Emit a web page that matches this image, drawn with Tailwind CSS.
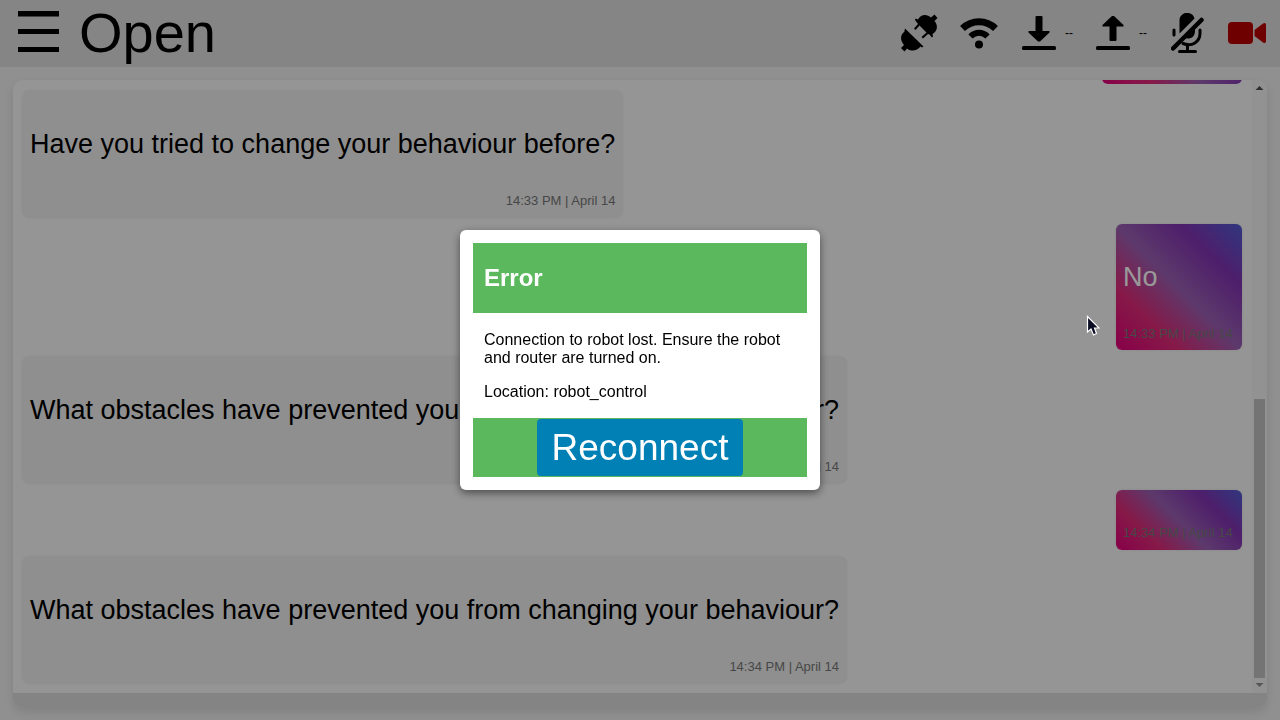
<!DOCTYPE html>
<html lang="en">
<head>
<meta charset="utf-8">
<meta name="viewport" content="width=device-width, initial-scale=1">
<title>Robot chat</title>
<script src="https://cdn.jsdelivr.net/npm/@tailwindcss/browser@4"></script>
</head>
<body class="flex h-screen flex-col overflow-hidden bg-[#f0f0f0] font-['Liberation_Sans',Arial,sans-serif] text-black">
  <header class="flex h-[67px] shrink-0 items-center justify-between bg-[#dedede] pr-[14px] pb-[2px] pl-[18px]">
    <div class="flex items-center gap-5">
      <button type="button" aria-label="Menu" class="mb-[2px]">
        <svg class="block h-[42px] w-[41px]" viewBox="0 0 41 42"><path d="M0 0H41V5.500H0zM0 18H41V23H0zM0 36H41V41H0z"/></svg>
      </button>
      <h1 class="text-[56px] leading-[65px]">Open</h1>
    </div>
    <div class="flex items-center">
      <svg aria-label="Connection" class="mr-[22px] h-[38px] w-[38px]" viewBox="0 0 38 38">
        <path d="M5 14.500L23.500 32.500L22 33.500L20.500 32.500C17 37 11 38 7 34.500L4.500 37.500L1 34L4 31C0 26 0 21 4.500 17.500L4.500 16.500z"/>
        <path d="M15.500 4.500L18 5.500C21 0 27 0 31 3.500L34.500 0.500L37.500 4L34.500 7C38 11 38 17 32.500 20L33 22.500L32 23.500L29.500 20.500L28 20L23 24.500L21.500 23L26.500 18.500L19.500 11.500L15.500 16L14 14.500L18 10L15 6z"/>
      </svg>
      <svg aria-label="Wi-Fi" class="mr-[24px] h-[32px] w-[38px]" viewBox="0 0 38 32" fill="none" stroke="#000">
        <path d="M2.500 11.500C12 2.500 26 2.500 35.500 11.500" stroke-width="7"/><path d="M10.500 19.500C15.500 14.500 22.500 14.500 27.500 19.500" stroke-width="6"/><circle cx="19" cy="27.500" r="4" fill="#000" stroke="none"/>
      </svg>
      <svg aria-label="Download" class="mr-[9px] h-[34px] w-[34px]" viewBox="0 0 34 34">
        <rect x="13.500" width="7" height="18" rx="1"/><path d="M6.500 15H27.500V16.500L18 25.500H16L6.500 16.500z"/><rect y="30" width="34" height="4" rx="1.500"/>
      </svg>
      <span class="mr-[23px] w-2 pt-px text-[12px] whitespace-nowrap">--</span>
      <svg aria-label="Upload" class="mr-[9px] h-[34px] w-[34px]" viewBox="0 0 34 34">
        <rect x="13.500" y="8" width="7" height="17" rx="1"/><path d="M6.500 10.500V9L16 0H18L27.500 9V10.500z"/><rect y="30" width="34" height="4" rx="1.500"/>
      </svg>
      <span class="mr-[24px] w-2 pt-px text-[12px] whitespace-nowrap">--</span>
      <button type="button" aria-label="Unmute microphone" class="mr-[24px]">
        <svg class="block h-[40px] w-[33px]" viewBox="0 0 33 40" fill="none" stroke="#000" stroke-linecap="round">
          <path d="M8.500 7C9 -2 22 -2.500 23.500 5.500L8.500 20.500zM24 13V18C24 25 18 27 12.500 24.500z" fill="#000" stroke="none"/>
          <path d="M3 17V22M29 17V20C29 29 21 34 12 30.500" stroke-width="3"/><path d="M16.500 32V38" stroke-width="3"/><path d="M8.500 38.500H24.500" stroke-width="3"/><path d="M2 35.500L30.500 7" stroke-width="4.500"/>
        </svg>
      </button>
      <button type="button" aria-label="Stop video">
        <svg class="block h-[22px] w-[38px]" viewBox="0 0 38 22" fill="#b90000"><rect width="25" height="22" rx="4"/><path d="M26.500 8L35 1.500Q38 0 38 3V19Q38 22 35 20.500L26.500 14z"/></svg>
      </button>
    </div>
  </header>

  <main class="mx-[13px] mt-[13px] mb-3 flex min-h-0 flex-1 flex-col overflow-hidden rounded-[10px] bg-[#f9f9f9] shadow-[0_4px_10px_rgba(0,0,0,0.1)]">
    <div class="flex min-h-0 flex-1">
      <div class="flex min-w-0 flex-1 flex-col items-start justify-end gap-[6px] overflow-hidden pr-[10px] pb-[9px] pl-[9px]">
        <div class="h-[60px] w-[140px] shrink-0 self-end rounded-[6px] bg-[linear-gradient(45deg,#e3007b,#df2b79_25%,#9a60b4_50%,#8333b2_75%,#515bd4)]"></div>
        <article class="shrink-0 rounded-lg bg-[#eeeeee] px-2 pt-[39px] pb-[9px] shadow-[0_0_3px_rgba(0,0,0,0.06)]">
          <p class="text-[27px] leading-[30px]">Have you tried to change your behaviour before?</p>
          <time class="mt-[34px] block text-right text-[13px] leading-4 text-[#777]">14:33 PM | April 14</time>
        </article>
        <article class="min-w-[126px] shrink-0 self-end rounded-[6px] bg-[linear-gradient(45deg,#e3007b,#df2b79_25%,#9a60b4_50%,#8333b2_75%,#515bd4)] px-[7px] pt-[38px] pb-2 shadow-[0_0_3px_rgba(0,0,0,0.1)]">
          <p class="text-[27px] leading-[30px] text-white">No</p>
          <time class="mt-[34px] block text-[13px] leading-4 text-[#777]">14:33 PM | April 14</time>
        </article>
        <article class="shrink-0 rounded-lg bg-[#eeeeee] px-2 pt-[39px] pb-[9px] shadow-[0_0_3px_rgba(0,0,0,0.06)]">
          <p class="text-[27px] leading-[30px]">What obstacles have prevented you from changing your behaviour?</p>
          <time class="mt-[34px] block text-right text-[13px] leading-4 text-[#777]">14:34 PM | April 14</time>
        </article>
        <article class="min-w-[126px] shrink-0 self-end rounded-[6px] bg-[linear-gradient(45deg,#e3007b,#df2b79_25%,#9a60b4_50%,#8333b2_75%,#515bd4)] px-[7px] pt-[35px] pb-[9px] shadow-[0_0_3px_rgba(0,0,0,0.1)]">
          <time class="block text-[13px] leading-4 text-[#777]">14:34 PM | April 14</time>
        </article>
        <article class="shrink-0 rounded-lg bg-[#eeeeee] px-2 pt-[39px] pb-[9px] shadow-[0_0_3px_rgba(0,0,0,0.06)]">
          <p class="text-[27px] leading-[30px]">What obstacles have prevented you from changing your behaviour?</p>
          <time class="mt-[34px] block text-right text-[13px] leading-4 text-[#777]">14:34 PM | April 14</time>
        </article>
      </div>
      <div class="flex w-[15px] shrink-0 flex-col items-center bg-[#f3f3f3] pt-[6px] pb-[6px]" aria-hidden="true">
        <svg class="h-1 w-[9px]" viewBox="0 0 9 4" fill="#505050"><path d="M0.500 4L4.500 0L8.500 4z"/></svg>
        <div class="flex-1"></div>
        <div class="mb-[5px] h-[279px] w-[11px] bg-[#c1c1c1]"></div>
        <svg class="h-1 w-[9px]" viewBox="0 0 9 4" fill="#909090"><path d="M0.500 0H8.500L4.500 4z"/></svg>
      </div>
    </div>
    <div class="h-[15px] shrink-0 bg-[#dddddd]"></div>
  </main>

  <div class="fixed inset-0 flex items-center justify-center bg-black/40">
    <section role="alertdialog" aria-modal="true" aria-labelledby="error-title" class="w-[360px] rounded-[6px] bg-white p-[13px] shadow-[0_3px_9px_rgba(0,0,0,0.5)]">
      <h2 id="error-title" class="bg-[#5cb85c] px-[11px] py-[21px] text-[24px] leading-7 font-bold text-white">Error</h2>
      <div class="flex flex-col gap-4 px-[11px] pt-[18px] pb-[17px] text-[16px] leading-[18px]">
        <p>Connection to robot lost. Ensure the robot and router are turned on.</p>
        <p>Location: robot_control</p>
      </div>
      <div class="flex justify-center bg-[#5cb85c] py-px">
        <button type="button" class="rounded-[4px] bg-[#0080b5] px-[15px] text-[37px] leading-[57px] text-white">Reconnect</button>
      </div>
    </section>
  </div>

  <svg class="pointer-events-none absolute top-[315px] left-[1086px] h-[22px] w-[14px]" viewBox="0 0 14 22" aria-hidden="true">
    <path d="M1.500 1.500V17L5 14L7.500 20L10.500 18.500L8.500 13H13z" fill="#0a0c24" stroke="#fff" stroke-width="1.200"/>
  </svg>
</body>
</html>
